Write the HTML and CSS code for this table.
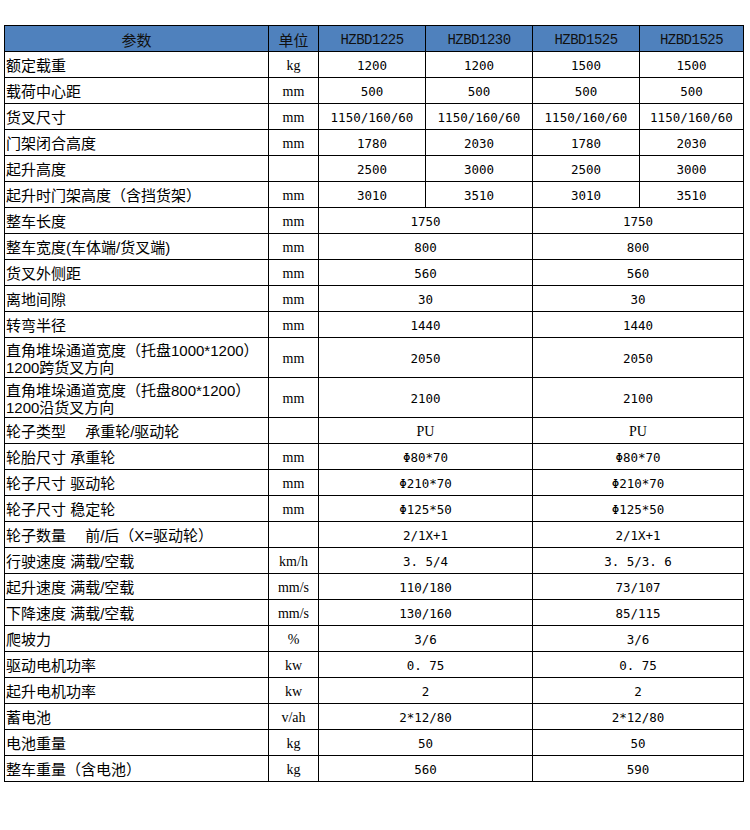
FILE: index.html
```html
<!DOCTYPE html>
<html lang="zh-CN">
<head>
<meta charset="utf-8">
<title>参数表</title>
<link rel="stylesheet" href="styles.css">
</head>
<body>
<table class="spec">
  <colgroup>
    <col class="c-name"><col class="c-unit"><col class="c-v"><col class="c-v"><col class="c-v"><col class="c-last">
  </colgroup>
  <thead>
    <tr class="head">
      <th class="cn">参数</th><th class="cn">单位</th>
      <th class="code">HZBD1225</th><th class="code">HZBD1230</th><th class="code">HZBD1525</th><th class="code">HZBD1525</th>
    </tr>
  </thead>
  <tbody>
    <tr><td class="name">额定载重</td><td class="unit">kg</td><td class="val">1200</td><td class="val">1200</td><td class="val">1500</td><td class="val">1500</td></tr>
    <tr><td class="name">载荷中心距</td><td class="unit">mm</td><td class="val">500</td><td class="val">500</td><td class="val">500</td><td class="val">500</td></tr>
    <tr><td class="name">货叉尺寸</td><td class="unit">mm</td><td class="val">1150/160/60</td><td class="val">1150/160/60</td><td class="val">1150/160/60</td><td class="val">1150/160/60</td></tr>
    <tr><td class="name">门架闭合高度</td><td class="unit">mm</td><td class="val">1780</td><td class="val">2030</td><td class="val">1780</td><td class="val">2030</td></tr>
    <tr><td class="name">起升高度</td><td class="unit"></td><td class="val">2500</td><td class="val">3000</td><td class="val">2500</td><td class="val">3000</td></tr>
    <tr><td class="name">起升时门架高度（含挡货架）</td><td class="unit">mm</td><td class="val">3010</td><td class="val">3510</td><td class="val">3010</td><td class="val">3510</td></tr>
    <tr><td class="name">整车长度</td><td class="unit">mm</td><td class="val" colspan="2">1750</td><td class="val" colspan="2">1750</td></tr>
    <tr><td class="name">整车宽度(车体端/货叉端)</td><td class="unit">mm</td><td class="val" colspan="2">800</td><td class="val" colspan="2">800</td></tr>
    <tr><td class="name">货叉外侧距</td><td class="unit">mm</td><td class="val" colspan="2">560</td><td class="val" colspan="2">560</td></tr>
    <tr><td class="name">离地间隙</td><td class="unit">mm</td><td class="val" colspan="2">30</td><td class="val" colspan="2">30</td></tr>
    <tr><td class="name">转弯半径</td><td class="unit">mm</td><td class="val" colspan="2">1440</td><td class="val" colspan="2">1440</td></tr>
    <tr class="tall"><td class="name">直角堆垛通道宽度（托盘1000*1200）<br>1200跨货叉方向</td><td class="unit">mm</td><td class="val" colspan="2">2050</td><td class="val" colspan="2">2050</td></tr>
    <tr class="tall"><td class="name">直角堆垛通道宽度（托盘800*1200）<br>1200沿货叉方向</td><td class="unit">mm</td><td class="val" colspan="2">2100</td><td class="val" colspan="2">2100</td></tr>
    <tr><td class="name">轮子类型　 承重轮/驱动轮</td><td class="unit"></td><td class="val serif" colspan="2">PU</td><td class="val serif" colspan="2">PU</td></tr>
    <tr><td class="name">轮胎尺寸 承重轮</td><td class="unit">mm</td><td class="val" colspan="2">Φ80*70</td><td class="val" colspan="2">Φ80*70</td></tr>
    <tr><td class="name">轮子尺寸 驱动轮</td><td class="unit">mm</td><td class="val" colspan="2">Φ210*70</td><td class="val" colspan="2">Φ210*70</td></tr>
    <tr><td class="name">轮子尺寸 稳定轮</td><td class="unit">mm</td><td class="val" colspan="2">Φ125*50</td><td class="val" colspan="2">Φ125*50</td></tr>
    <tr><td class="name">轮子数量　 前/后（X=驱动轮）</td><td class="unit"></td><td class="val" colspan="2">2/1X+1</td><td class="val" colspan="2">2/1X+1</td></tr>
    <tr><td class="name">行驶速度 满载/空载</td><td class="unit">km/h</td><td class="val" colspan="2">3.&nbsp;5/4</td><td class="val" colspan="2">3.&nbsp;5/3.&nbsp;6</td></tr>
    <tr><td class="name">起升速度 满载/空载</td><td class="unit">mm/s</td><td class="val" colspan="2">110/180</td><td class="val" colspan="2">73/107</td></tr>
    <tr><td class="name">下降速度 满载/空载</td><td class="unit">mm/s</td><td class="val" colspan="2">130/160</td><td class="val" colspan="2">85/115</td></tr>
    <tr><td class="name">爬坡力</td><td class="unit">%</td><td class="val" colspan="2">3/6</td><td class="val" colspan="2">3/6</td></tr>
    <tr><td class="name">驱动电机功率</td><td class="unit">kw</td><td class="val" colspan="2">0.&nbsp;75</td><td class="val" colspan="2">0.&nbsp;75</td></tr>
    <tr><td class="name">起升电机功率</td><td class="unit">kw</td><td class="val" colspan="2">2</td><td class="val" colspan="2">2</td></tr>
    <tr><td class="name">蓄电池</td><td class="unit">v/ah</td><td class="val" colspan="2">2*12/80</td><td class="val" colspan="2">2*12/80</td></tr>
    <tr><td class="name">电池重量</td><td class="unit">kg</td><td class="val" colspan="2">50</td><td class="val" colspan="2">50</td></tr>
    <tr><td class="name">整车重量（含电池）</td><td class="unit">kg</td><td class="val" colspan="2">560</td><td class="val" colspan="2">590</td></tr>
  </tbody>
</table>
</body>
</html>
```

FILE: styles.css
```css
html, body {
  margin: 0;
  padding: 0;
  background: #ffffff;
}

body {
  padding: 25px 0 0 4px;
  font-family: "Noto Sans CJK SC", "Liberation Sans", sans-serif;
  color: #000000;
}

.spec {
  border-collapse: collapse;
  table-layout: fixed;
  width: 739px;
}

.c-name { width: 264px; }
.c-unit { width: 50px; }
.c-v { width: 107px; }
.c-last { width: 104px; }

.spec th,
.spec td {
  border: 1px solid #000000;
  padding: 2px 0 0 0;
  height: 23px;
  vertical-align: middle;
  white-space: nowrap;
  overflow: hidden;
}

.head th {
  background: #4f81bd;
  font-weight: normal;
  color: #111111;
  text-align: center;
}

.head .cn {
  font-family: "Noto Sans CJK SC", sans-serif;
  font-size: 15px;
}

.head .code {
  font-family: "Liberation Mono", monospace;
  font-size: 14px;
  letter-spacing: -0.5px;
}

.name {
  text-align: left;
  padding-left: 1px !important;
  font-size: 15px;
  line-height: 17px;
  font-family: "Liberation Sans", "Noto Sans CJK SC", sans-serif;
}

.spec .tall td {
  height: 37px;
}

.unit {
  text-align: center;
  font-family: "Liberation Serif", serif;
  font-size: 14px;
}

.val {
  text-align: center;
  font-family: "DejaVu Sans Mono", monospace;
  font-size: 12.5px;
}

.val.serif {
  font-family: "Liberation Serif", serif;
  font-size: 14px;
}
```
